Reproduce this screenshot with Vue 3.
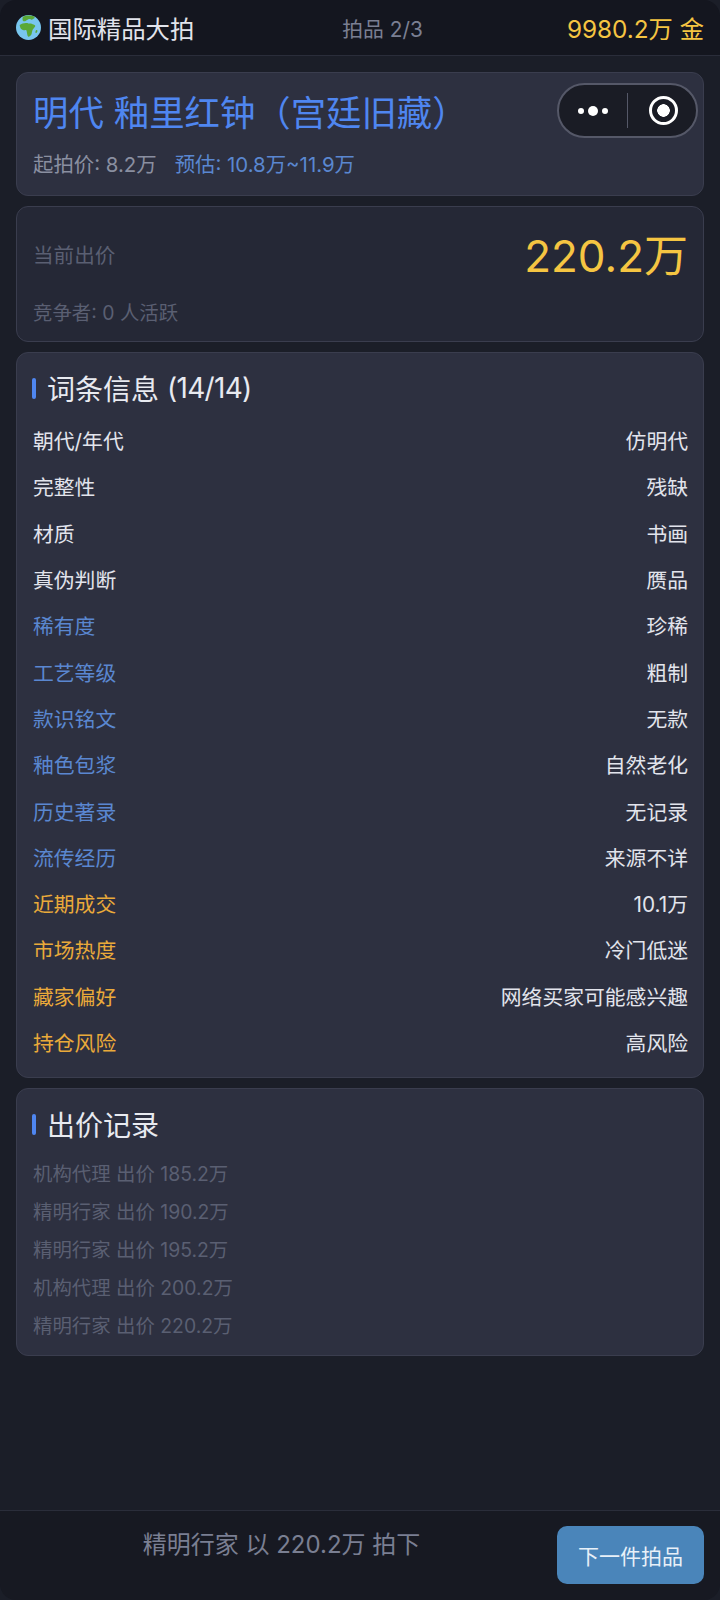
<template>
  <div class="page">
    <header class="top">
      <div class="brand">
        <svg class="globe" viewBox="0 0 24 24" width="25" height="25">
          <circle cx="12" cy="12" r="12" fill="#78c6ee" />
          <path d="M7 1.500C9 .4 14 0 17 1.200c1 .8 1.200 1.600.4 2.200-1.200.3-1.500 1.200-2.600 1.100-.8-1-2-.8-3-.4-1 .4-1.600 1.300-2.600 1.600C8.300 6.300 7 6.200 6.500 5.200 6 4 6.200 2.500 7 1.500z" fill="#5aa836" />
          <path d="M3.500 9.500c2-1.500 5-2.200 7.500-1.800 1 .8 2 .3 3 .5 1.500.2 2.500 1 3.800 1.300 1 .3.800 1.500 0 2.300-1 1.200-1.700 2-2.200 3.500-.5 1.300-.3 2.500-1 3.700-.7 1.100-1.800 2-2.800 1.800-.9-.6-.9-2-1.200-3.200-.3-1.300-.1-2.400-1-3.100-1.600.2-3.600 0-4.600-1.100-1-1-1.200-2.900-1.500-3.900z" fill="#5aa836" />
          <path d="M19.500 14.500c.8-.4 1.300.4 1 1.400-.4 1-1.100 1.800-1.700 1.300-.4-.8.100-2.300.7-2.700z" fill="#5aa836" />
        </svg>
        <span>国际精品大拍</span>
      </div>
      <div class="lot">拍品 2/3</div>
      <div class="gold">9980.2万 金</div>
    </header>

    <main class="content">
      <section class="card head-card">
        <h1>明代 釉里红钟（宫廷旧藏）</h1>
        <div class="prices">
          <span>起拍价: 8.2万</span>
          <span class="est">预估: 10.8万~11.9万</span>
        </div>
        <div class="capsule">
          <div class="cap-dots"><i></i><b></b><i></i></div>
          <div class="cap-line"></div>
          <div class="cap-target"><span></span></div>
        </div>
      </section>

      <section class="card bid-card">
        <div class="bid-row">
          <span class="bid-label">当前出价</span>
          <span class="bid-value">220.2万</span>
        </div>
        <div class="bid-sub">竞争者: 0 人活跃</div>
      </section>

      <section class="card info-card">
        <h2 class="sec-title">词条信息 <span class="count">(14/14)</span></h2>
        <div v-for="a in attrs" :key="a.k" class="attr">
          <span :class="a.c">{{ a.k }}</span>
          <span>{{ a.v }}</span>
        </div>
      </section>

      <section class="card log-card">
        <h2 class="sec-title">出价记录</h2>
        <div v-for="(l, i) in logs" :key="i" class="log">{{ l }}</div>
      </section>
    </main>

    <footer class="foot">
      <div class="result">精明行家 以 220.2万 拍下</div>
      <button class="next">下一件拍品</button>
    </footer>
  </div>
</template>

<script setup>
const attrs = [
  { k: '朝代/年代', v: '仿明代', c: '' },
  { k: '完整性', v: '残缺', c: '' },
  { k: '材质', v: '书画', c: '' },
  { k: '真伪判断', v: '赝品', c: '' },
  { k: '稀有度', v: '珍稀', c: 'blue' },
  { k: '工艺等级', v: '粗制', c: 'blue' },
  { k: '款识铭文', v: '无款', c: 'blue' },
  { k: '釉色包浆', v: '自然老化', c: 'blue' },
  { k: '历史著录', v: '无记录', c: 'blue' },
  { k: '流传经历', v: '来源不详', c: 'blue' },
  { k: '近期成交', v: '10.1万', c: 'amber' },
  { k: '市场热度', v: '冷门低迷', c: 'amber' },
  { k: '藏家偏好', v: '网络买家可能感兴趣', c: 'amber' },
  { k: '持仓风险', v: '高风险', c: 'amber' }
]
const logs = [
  '机构代理 出价 185.2万',
  '精明行家 出价 190.2万',
  '精明行家 出价 195.2万',
  '机构代理 出价 200.2万',
  '精明行家 出价 220.2万'
]
</script>

<style>
html, body { margin: 0; background: #1b1e28; }
</style>

<style scoped>
.page {
  width: 720px;
  height: 1600px;
  display: flex;
  flex-direction: column;
  background: #1b1e28;
  color: #e2e4ec;
  font-family: Inter, "Noto Sans CJK SC", sans-serif;
  font-weight: 400;
  overflow: hidden;
}
.top {
  height: 56px;
  box-sizing: border-box;
  padding: 0 16px;
  display: flex;
  align-items: center;
  justify-content: space-between;
  background: #14161f;
  border-bottom: 1px solid #2a2d3a;
  border-radius: 16px 16px 0 0;
  flex: none;
}
.brand { display: flex; align-items: center; gap: 7px; font-size: 24.400px; width: 285px; }
.lot { font-size: 20.800px; color: #7a7f92; }
.gold { font-size: 24.300px; color: #f5c542; width: 240px; text-align: right; }
.content {
  flex: 1;
  padding: 16px 16px 0;
  display: flex;
  flex-direction: column;
  gap: 10px;
}
.card {
  background: #2d3040;
  border: 1px solid #3a3d4e;
  border-radius: 12px;
  box-sizing: border-box;
  position: relative;
}
.head-card { height: 124px; padding: 16px 16px 0; }
h1 { margin: 0; font-size: 35.400px; line-height: 50px; font-weight: 400; color: #4f86f0; }
.prices { margin-top: 10px; font-size: 20.400px; line-height: 32px; color: #8a8fa0; display: flex; gap: 18px; }
.est { color: #5a87d0; }
.capsule {
  position: absolute;
  top: 10px;
  right: 5px;
  width: 141px;
  height: 55px;
  box-sizing: border-box;
  border: 2px solid #555868;
  border-radius: 28px;
  background: #1a1c25;
  display: flex;
  align-items: center;
}
.cap-dots { width: 68px; display: flex; align-items: center; justify-content: center; gap: 4px; }
.cap-dots i { width: 6px; height: 6px; border-radius: 50%; background: #fff; }
.cap-dots b { width: 10px; height: 10px; border-radius: 50%; background: #fff; }
.cap-line { width: 1px; height: 35px; background: #555868; }
.cap-target { flex: 1; padding-left: 3px; display: flex; justify-content: center; }
.cap-target span {
  width: 29px;
  height: 29px;
  box-sizing: border-box;
  border: 3px solid #fff;
  border-radius: 50%;
  background: radial-gradient(circle, #fff 0 6px, transparent 6.500px);
}
.bid-card { height: 136px; padding: 0 15px; background: #252836; }
.bid-row { height: 92px; padding-top: 1px; box-sizing: border-box; display: flex; align-items: center; justify-content: space-between; }
.bid-label { padding-left: 1px; font-size: 20.600px; color: #5a5f72; }
.bid-value { margin-top: -2px; font-size: 44px; color: #f5c542; }
.bid-sub { padding-left: 1px; font-size: 19.400px; line-height: 26px; margin-top: 1px; color: #5a5f72; }
.info-card { height: 726px; padding: 0 15px; }
.sec-title {
  margin: 0;
  height: 64px;
  box-sizing: border-box;
  padding-top: 6px;
  display: flex;
  align-items: center;
  font-size: 28px;
  font-weight: 400;
  color: #e8eaf0;
}
.sec-title::before {
  content: '';
  width: 4px;
  height: 21px;
  border-radius: 2px;
  background: #4f86f0;
  margin-right: 11px;
}
.count { margin-left: 8px; letter-spacing: -0.700px; }
.attr {
  height: 46.300px;
  padding-left: 1px;
  display: flex;
  align-items: center;
  justify-content: space-between;
  font-size: 20.800px;
}
.blue { color: #5a87d0; }
.amber { color: #eaaa3a; }
.log-card { height: 268px; padding: 0 15px; }
.log { height: 38.200px; padding-left: 1px; display: flex; align-items: center; font-size: 19.400px; color: #5a5f72; }
.foot {
  height: 90px;
  box-sizing: border-box;
  flex: none;
  padding: 15px 16px 0;
  display: flex;
  align-items: flex-start;
  background: #171922;
  border-top: 1px solid #2a2d3a;
  border-radius: 0 0 16px 16px;
}
.result { flex: 1; padding-right: 10px; text-align: center; font-size: 24px; line-height: 38px; color: #7a7f92; }
.next {
  width: 147px;
  height: 58px;
  border: 0;
  border-radius: 10px;
  background: #4a85ba;
  color: #e8f0f8;
  font: inherit;
  font-size: 21px;
}
</style>
